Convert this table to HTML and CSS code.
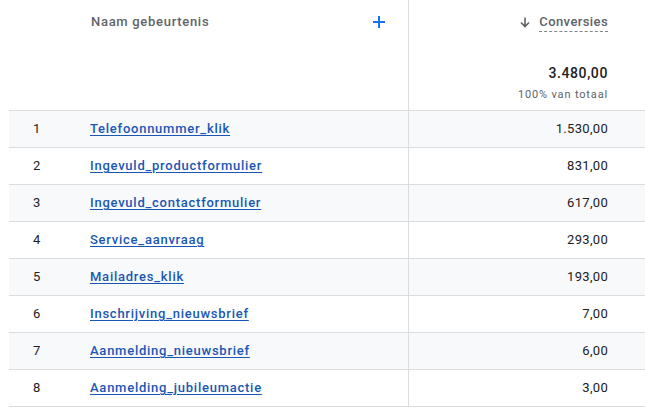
FILE: index.html
```html
<!DOCTYPE html>
<html lang="nl">
<head>
<meta charset="utf-8">
<link rel="stylesheet" href="styles.css">
</head>
<body>
<div class="report">
  <div class="head">
    <div class="cell idx"></div>
    <div class="cell name-head">
      <span class="head-label">Naam gebeurtenis</span>
      <svg class="plus" width="12" height="12" viewBox="0 0 12 12"><path d="M6 0v12M0 6h12" stroke="#1a73e8" stroke-width="2"/></svg>
    </div>
    <div class="cell val-head">
      <div class="metric">
        <svg class="arrow" width="10" height="11" viewBox="0 0 10 11"><path d="M5 0.5v9M1 5.5l4 4 4-4" stroke="#5f6368" stroke-width="1.6" fill="none"/></svg>
        <span class="metric-label">Conversies</span>
      </div>
      <div class="total">3.480,00</div>
      <div class="share">100% van totaal</div>
    </div>
  </div>
  <div class="row shaded"><div class="cell idx">1</div><div class="cell name"><a href="#">Telefoonnummer_klik</a></div><div class="cell val">1.530,00</div></div>
  <div class="row"><div class="cell idx">2</div><div class="cell name"><a href="#">Ingevuld_productformulier</a></div><div class="cell val">831,00</div></div>
  <div class="row shaded"><div class="cell idx">3</div><div class="cell name"><a href="#">Ingevuld_contactformulier</a></div><div class="cell val">617,00</div></div>
  <div class="row"><div class="cell idx">4</div><div class="cell name"><a href="#">Service_aanvraag</a></div><div class="cell val">293,00</div></div>
  <div class="row shaded"><div class="cell idx">5</div><div class="cell name"><a href="#">Mailadres_klik</a></div><div class="cell val">193,00</div></div>
  <div class="row"><div class="cell idx">6</div><div class="cell name"><a href="#">Inschrijving_nieuwsbrief</a></div><div class="cell val">7,00</div></div>
  <div class="row shaded"><div class="cell idx">7</div><div class="cell name"><a href="#">Aanmelding_nieuwsbrief</a></div><div class="cell val">6,00</div></div>
  <div class="row"><div class="cell idx">8</div><div class="cell name"><a href="#">Aanmelding_jubileumactie</a></div><div class="cell val">3,00</div></div>
</div>
</body>
</html>
```

FILE: styles.css
```css
html, body {
  margin: 0;
  padding: 0;
  background: #fff;
}
body {
  font-family: Roboto, "Liberation Sans", Arial, sans-serif;
  font-size: 13px;
  color: #202124;
}
.report {
  margin-left: 9px;
}
.head, .row {
  display: grid;
  grid-template-columns: 66px 333px 1fr;
  border-bottom: 1px solid #dadce0;
}
.head {
  height: 110px;
}
.row {
  height: 36px;
  line-height: 36px;
}
.row.shaded {
  background: #f8f9fa;
}
.idx {
  padding-left: 24px;
}
.name {
  padding-left: 15px;
}
.name a {
  color: #1a57b5;
  text-decoration: underline;
  font-weight: 500;
  letter-spacing: 0.75px;
  text-underline-offset: 2px;
}
.val {
  border-left: 1px solid #dadce0;
  text-align: right;
  padding-right: 37px;
  letter-spacing: 0.3px;
}
.name-head {
  display: flex;
  justify-content: space-between;
  align-items: flex-start;
  padding: 14px 23px 0 16px;
}
.head-label {
  color: #5f6368;
  font-weight: 500;
  line-height: 16px;
  letter-spacing: 0.7px;
}
.plus {
  margin-top: 2px;
}
.val-head {
  border-left: 1px solid #dadce0;
  display: flex;
  flex-direction: column;
  align-items: flex-end;
  padding: 14px 37px 0 0;
}
.metric {
  display: flex;
  align-items: flex-start;
  gap: 9px;
  height: 18px;
}
.arrow {
  margin-top: 3px;
}
.metric-label {
  color: #5f6368;
  font-weight: 500;
  line-height: 16px;
  letter-spacing: 0.4px;
  padding-bottom: 1px;
  border-bottom: 1px dashed #80868b;
}
.total {
  margin-top: 31px;
  font-size: 14px;
  font-weight: 500;
  line-height: 20px;
  letter-spacing: 0.6px;
}
.share {
  margin-top: 5px;
  font-size: 11px;
  color: #5f6368;
  line-height: 14px;
  letter-spacing: 0.85px;
}
```
